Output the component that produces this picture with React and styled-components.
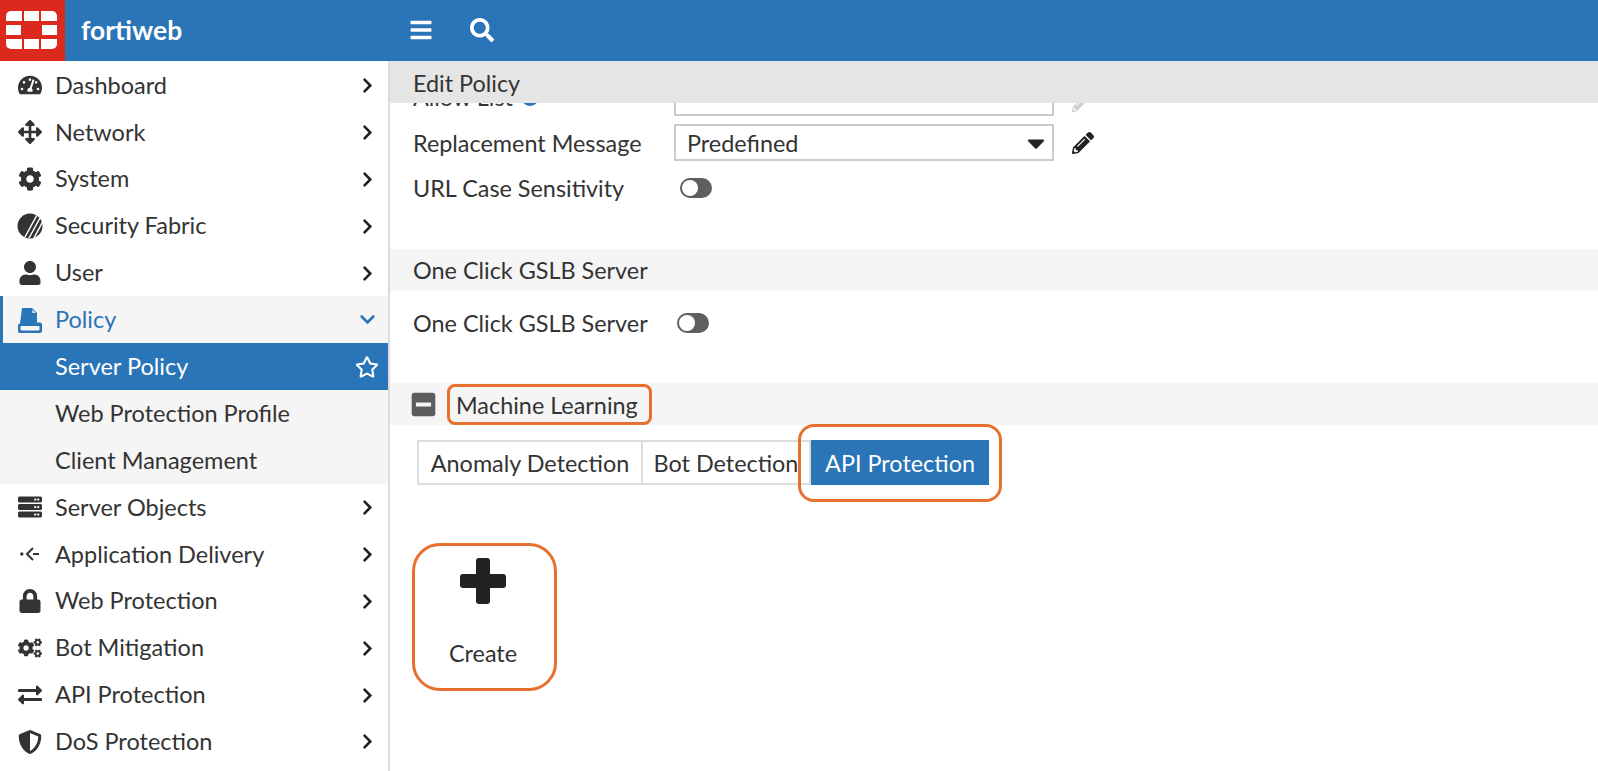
import React from "react";
import styled, { createGlobalStyle } from "styled-components";
import {
  FaTachometerAlt,
  FaArrowsAlt,
  FaCog,
  FaUser,
  FaServer,
  FaLock,
  FaCogs,
  FaExchangeAlt,
  FaShieldAlt,
  FaChevronRight,
  FaChevronDown,
  FaRegStar,
  FaSearch,
  FaBars,
  FaPencilAlt,
  FaMinusSquare,
  FaCaretDown,
} from "react-icons/fa";

const BLUE = "#2a74b8";
const ORANGE = "#e8702f";

const GlobalStyle = createGlobalStyle`
  html, body {
    margin: 0;
    height: 100%;
    overflow: hidden;
    background: #fff;
  }
  body {
    font-family: Lato, "Liberation Sans", sans-serif;
    color: #333;
  }
`;

const Page = styled.div`
  display: flex;
  flex-direction: column;
  height: 771px;
`;

// Top bar
const TopBar = styled.header`
  display: flex;
  align-items: center;
  height: 61px;
  flex: none;
  background: ${BLUE};
  color: #fff;
`;

const LogoBox = styled.div`
  display: flex;
  width: 65px;
  height: 61px;
  background: #dc291e;
`;

const Brand = styled.div`
  width: 323px;
  padding: 0 0 2px 16px;
  box-sizing: border-box;
  font-size: 26.4px;
  font-weight: 700;
`;

const TopIcons = styled.div`
  display: flex;
  align-items: center;
  gap: 37px;
  padding: 0 0 2px 21px;
  font-size: 24px;
`;

const TopIcon = styled.span`
  display: flex;
`;

const Body = styled.div`
  display: flex;
  flex: 1;
  min-height: 0;
`;

// Left navigation
const Sidebar = styled.nav`
  width: 390px;
  flex: none;
  box-sizing: border-box;
  padding-top: 1px;
  border-right: 2px solid #dcdcdc;
  overflow: hidden;
`;

const NavRow = styled.div`
  display: flex;
  align-items: center;
  height: 46.9px;
  box-sizing: border-box;
  padding-right: ${(p) => (p.$selected ? 9 : 12)}px;
  font-size: 23.5px;
  line-height: 1;
  background: ${(p) => (p.$selected ? BLUE : p.$open || p.$sub ? "#f5f5f5" : "transparent")};
  color: ${(p) => (p.$selected ? "#fff" : p.$open ? BLUE : "#333")};
  border-left: ${(p) => (p.$open ? `3px solid ${BLUE}` : "0")};
  padding-left: ${(p) => (p.$open ? "14px" : p.$sub || p.$selected ? "55px" : "17px")};
`;

const NavIcon = styled.span`
  display: flex;
  justify-content: center;
  align-items: center;
  width: 26px;
  margin-right: 12px;
  font-size: 24px;
  flex: none;
`;

const NavLabel = styled.span`
  flex: 1;
`;

const NavEnd = styled.span`
  display: flex;
  font-size: ${(p) => p.$size || 17}px;
  color: ${(p) => p.$color || "#222"};
`;

// Main panel
const Main = styled.main`
  flex: 1;
  min-width: 0;
  display: flex;
  flex-direction: column;
`;

const PanelTitle = styled.div`
  display: flex;
  align-items: center;
  flex: none;
  height: 42px;
  box-sizing: border-box;
  padding: 2px 0 0 23px;
  background: #e5e5e5;
  font-size: 23.4px;
`;

const ClippedRow = styled.div`
  display: flex;
  align-items: flex-end;
  height: 13px;
  overflow: hidden;
  padding-left: 23px;
  font-size: 23.4px;
`;

const ClippedLabel = styled.span`
  display: flex;
  align-items: center;
  gap: 8px;
  width: 261px;
  margin-bottom: 5px;
  flex: none;
`;

const InfoDot = styled.span`
  width: 18px;
  height: 18px;
  border-radius: 50%;
  background: ${BLUE};
`;

const ClippedInput = styled.div`
  width: 380px;
  height: 24px;
  box-sizing: border-box;
  border: 2px solid #ccc;
  flex: none;
`;

const ClippedPencil = styled.span`
  display: flex;
  margin: 0 0 4px 18px;
  color: #ccc;
  font-size: 16px;
`;

const FormRow = styled.div`
  display: flex;
  align-items: center;
  height: ${(p) => p.$h}px;
  margin-top: ${(p) => p.$top || 0}px;
  padding-left: 23px;
  font-size: 23.4px;
`;

const FormLabel = styled.span`
  width: ${(p) => p.$w}px;
  flex: none;
  color: #333;
`;

const Select = styled.div`
  display: flex;
  align-items: center;
  justify-content: space-between;
  width: 380px;
  height: 37px;
  box-sizing: border-box;
  padding: 0 2px 0 11px;
  border: 2px solid #ccc;
`;

const PencilButton = styled.span`
  display: flex;
  margin-left: 18px;
  font-size: 22px;
  color: #222;
`;

const Toggle = styled.span`
  position: relative;
  display: block;
  width: 32px;
  height: 20px;
  border-radius: 10px;
  background: #5f5f5f;
  &::before {
    content: "";
    position: absolute;
    left: 2px;
    top: 2px;
    width: 16px;
    height: 16px;
    border-radius: 50%;
    background: #fff;
  }
`;

const SectionHeader = styled.div`
  display: flex;
  align-items: center;
  height: 42px;
  margin-top: ${(p) => p.$top}px;
  padding-left: ${(p) => p.$pad}px;
  background: #f5f5f5;
  font-size: 23.4px;
`;

const Collapse = styled.span`
  display: flex;
  margin-right: 10px;
  font-size: 27px;
  color: #5c5c5c;
`;

const MarkedTitle = styled.span`
  box-sizing: border-box;
  display: flex;
  align-items: center;
  height: 41px;
  padding: 1px 11px 0 6px;
  border: 3px solid ${ORANGE};
  border-radius: 8px;
`;

const Tabs = styled.div`
  display: flex;
  width: fit-content;
  height: 45px;
  margin: 15px 0 0 27px;
  box-sizing: border-box;
`;

const Tab = styled.div`
  position: relative;
  display: flex;
  align-items: center;
  justify-content: center;
  width: ${(p) => p.$w}px;
  box-sizing: border-box;
  font-size: 23.4px;
  border: 2px solid ${(p) => (p.$active ? BLUE : "#ddd")};
  border-left-width: ${(p) => (p.$first || p.$active ? 2 : 0)}px;
  background: ${(p) => (p.$active ? BLUE : "#fff")};
  color: ${(p) => (p.$active ? "#fff" : "#333")};
`;

// Callout drawn over the tab
const TabCallout = styled.span`
  position: absolute;
  left: -15px;
  right: -15px;
  top: -18px;
  bottom: -19px;
  border: 3px solid ${ORANGE};
  border-radius: 16px;
`;

const CreateButton = styled.div`
  display: flex;
  flex-direction: column;
  align-items: center;
  width: 145px;
  height: 148px;
  box-sizing: border-box;
  margin: 58px 0 0 22px;
  padding: 11px 3px 0 0;
  border: 3px solid ${ORANGE};
  border-radius: 28px;
  font-size: 23.4px;
`;

const PlusIcon = styled.svg`
  display: block;
  width: 48px;
  height: 48px;
  color: #222;
`;

const CreateLabel = styled.span`
  margin-top: 34px;
`;

const LogoMark = () => (
  <svg width="65" height="61" viewBox="0 0 65 61" fill="#fff">
    <path d="M6 21v-5a5 5 0 0 1 5-5h11v10z" />
    <rect x="24" y="11" width="15" height="10" />
    <path d="M41 11h11a5 5 0 0 1 5 5v5H41z" />
    <rect x="6" y="25" width="15" height="10" />
    <rect x="42" y="25" width="15" height="10" />
    <path d="M6 39h16v10H11a5 5 0 0 1-5-5z" />
    <rect x="24" y="39" width="15" height="10" />
    <path d="M41 39h16v5a5 5 0 0 1-5 5H41z" />
  </svg>
);

const FabricIcon = () => (
  <svg width="26" height="26" viewBox="0 0 26 26">
    <circle cx="13" cy="13" r="12.5" fill="#333" />
    <path d="M23 5 12 25M25.5 9 17 25M20 2 8 24" stroke="#fff" strokeWidth="1.5" />
  </svg>
);

const PolicyIcon = () => (
  <svg width="26" height="26" viewBox="0 0 26 26" fill={BLUE}>
    <path d="M5 1h10l5 5v11H3z" />
    <path d="M1 18.5a2 2 0 0 1 2-2v-1h20a2 2 0 0 1 2 2V24a2 2 0 0 1-2 2H3a2 2 0 0 1-2-2z" />
    <rect x="3.5" y="19" width="19" height="4.5" rx="1" fill="#f5f5f5" />
    <path d="M15.5 2.5 18.5 6h-3z" fill="#f5f5f5" />
  </svg>
);

const DeliveryIcon = () => (
  <svg width="20" height="16" viewBox="0 0 20 16" fill="none" stroke="#333" strokeWidth="2">
    <path d="M13 8h6M13 2 7 8l6 6" />
    <circle cx="1.8" cy="8" r="1.7" fill="#333" stroke="none" />
  </svg>
);

const NAV_ITEMS = [
  { label: "Dashboard", icon: <FaTachometerAlt /> },
  { label: "Network", icon: <FaArrowsAlt /> },
  { label: "System", icon: <FaCog /> },
  { label: "Security Fabric", icon: <FabricIcon /> },
  { label: "User", icon: <FaUser /> },
  { label: "Policy", icon: <PolicyIcon />, open: true },
  { label: "Server Policy", selected: true },
  { label: "Web Protection Profile", sub: true },
  { label: "Client Management", sub: true },
  { label: "Server Objects", icon: <FaServer /> },
  { label: "Application Delivery", icon: <DeliveryIcon /> },
  { label: "Web Protection", icon: <FaLock /> },
  { label: "Bot Mitigation", icon: <FaCogs /> },
  { label: "API Protection", icon: <FaExchangeAlt /> },
  { label: "DoS Protection", icon: <FaShieldAlt /> },
];

const NavEndIcon = ({ item }) => {
  if (item.sub) return null;
  if (item.selected)
    return (
      <NavEnd $size={24} $color="#fff">
        <FaRegStar />
      </NavEnd>
    );
  if (item.open)
    return (
      <NavEnd $color={BLUE}>
        <FaChevronDown />
      </NavEnd>
    );
  return (
    <NavEnd>
      <FaChevronRight />
    </NavEnd>
  );
};

export default function App() {
  return (
    <Page>
      <GlobalStyle />
      <TopBar>
        <LogoBox>
          <LogoMark />
        </LogoBox>
        <Brand>fortiweb</Brand>
        <TopIcons>
          <TopIcon>
            <FaBars />
          </TopIcon>
          <TopIcon>
            <FaSearch />
          </TopIcon>
        </TopIcons>
      </TopBar>
      <Body>
        <Sidebar>
          {NAV_ITEMS.map((item) => (
            <NavRow key={item.label} $open={item.open} $selected={item.selected} $sub={item.sub}>
              {item.icon && <NavIcon>{item.icon}</NavIcon>}
              <NavLabel>{item.label}</NavLabel>
              <NavEndIcon item={item} />
            </NavRow>
          ))}
        </Sidebar>
        <Main>
          <PanelTitle>Edit Policy</PanelTitle>
          <ClippedRow>
            <ClippedLabel>
              Allow List <InfoDot />
            </ClippedLabel>
            <ClippedInput />
            <ClippedPencil>
              <FaPencilAlt />
            </ClippedPencil>
          </ClippedRow>
          <FormRow $h={37} $top={8}>
            <FormLabel $w={261}>Replacement Message</FormLabel>
            <Select>
              Predefined
              <FaCaretDown size={28} color="#222" />
            </Select>
            <PencilButton>
              <FaPencilAlt />
            </PencilButton>
          </FormRow>
          <FormRow $h={37} $top={8}>
            <FormLabel $w={267}>URL Case Sensitivity</FormLabel>
            <Toggle />
          </FormRow>
          <SectionHeader $top={43} $pad={23}>
            One Click GSLB Server
          </SectionHeader>
          <FormRow $h={37} $top={13}>
            <FormLabel $w={264}>One Click GSLB Server</FormLabel>
            <Toggle />
          </FormRow>
          <SectionHeader $top={42} $pad={20}>
            <Collapse>
              <FaMinusSquare />
            </Collapse>
            <MarkedTitle>Machine Learning</MarkedTitle>
          </SectionHeader>
          <Tabs>
            <Tab $first $w={226}>
              Anomaly Detection
            </Tab>
            <Tab $w={168}>Bot Detection</Tab>
            <Tab $active $w={178}>
              API Protection
              <TabCallout />
            </Tab>
          </Tabs>
          <CreateButton>
            <PlusIcon viewBox="0 0 48 48" fill="currentColor">
              <rect x="17" y="1" width="14" height="46" rx="3" />
              <rect x="1" y="17" width="46" height="14" rx="3" />
            </PlusIcon>
            <CreateLabel>Create</CreateLabel>
          </CreateButton>
        </Main>
      </Body>
    </Page>
  );
}
